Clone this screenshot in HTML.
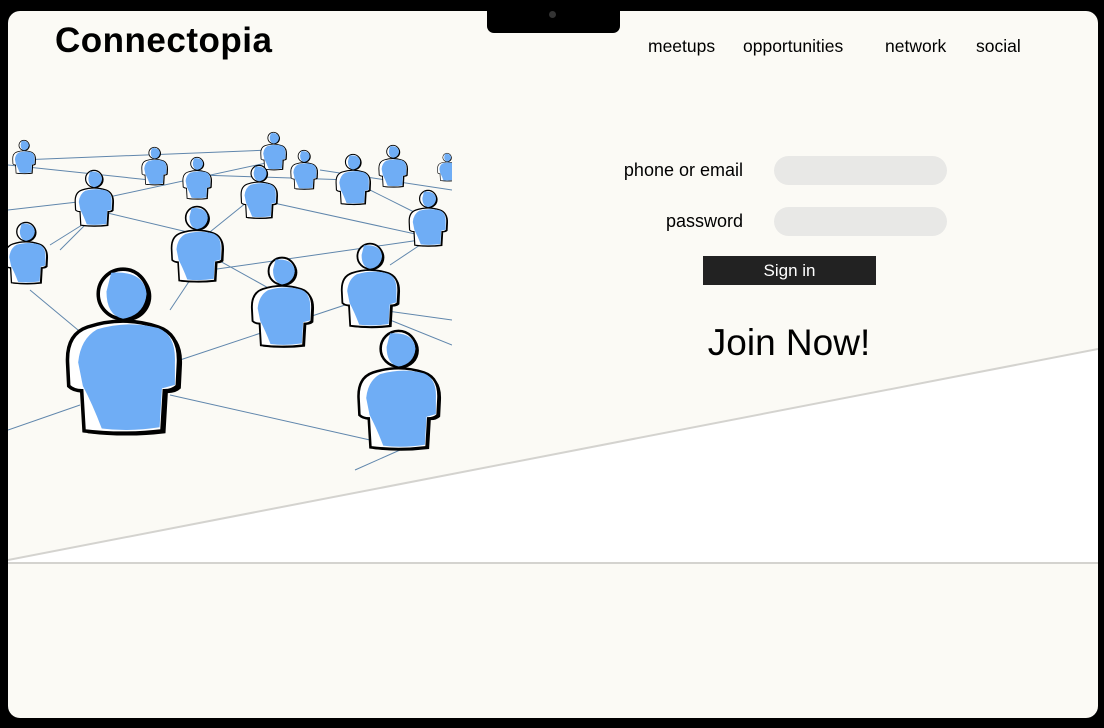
<!DOCTYPE html>
<html><head><meta charset="utf-8"><style>
html,body{margin:0;padding:0;width:1104px;height:728px;background:#000;overflow:hidden;font-family:"Liberation Sans",sans-serif}
#scr{position:absolute;left:8px;top:11px;width:1090px;height:707px;background:#fbfaf5;border-radius:12px;overflow:hidden}
.a{position:absolute;color:#000}
.nav{top:25px;font-size:17.5px}
.inp{position:absolute;left:766px;width:173px;height:29px;background:#e8e8e6;border-radius:15px}
</style></head><body>
<div id="scr">
<svg width="1090" height="707" style="position:absolute;left:0;top:0">
<defs>
<g id="p">
<circle cx="53" cy="24" r="21" fill="#000"/>
<path d="M23 52 Q53 42 83 52 Q101 58 100 82 L99 102 Q95 106 88 106 L86 140 Q53 144 20 140 L18 106 Q11 106 7 102 L6 82 Q5 58 23 52Z" fill="#000"/>
<circle cx="50" cy="22" r="21" fill="#fff" stroke="#000" stroke-width="3"/>
<path d="M40 4 Q68 2 70 22 Q68 40 50 43 Q36 40 36 20Z" fill="#6fadf5"/>
<path d="M20 50 Q50 40 80 50 Q98 56 97 80 L96 100 Q92 104 85 104 L83 138 Q50 142 17 138 L15 104 Q8 104 4 100 L3 80 Q2 56 20 50Z" fill="#fff" stroke="#000" stroke-width="3"/>
<path d="M28 52 Q55 44 80 51 Q95 57 94 80 L94 99 L83 102 L81 135 Q55 139 32 136 Q24 115 16 100 L12 80 Q14 60 28 52Z" fill="#6fadf5"/>
</g>
</defs>
<polygon points="0,549 1090,338 1090,552 0,552" fill="#fff"/>
<line x1="0" y1="549" x2="1090" y2="338" stroke="#d4d3cf" stroke-width="2"/>
<line x1="0" y1="552" x2="1090" y2="552" stroke="#d4d3cf" stroke-width="2"/>
<g transform="translate(-8,-11)">
<svg x="8" y="120" width="444" height="352" viewBox="8 120 444 352">
<g stroke="#3a6a9a" stroke-width="1" opacity=".8">
<line x1="8" y1="165" x2="150" y2="180"/><line x1="20" y1="160" x2="270" y2="150"/><line x1="95" y1="200" x2="280" y2="160"/>
<line x1="95" y1="200" x2="8" y2="210"/><line x1="95" y1="210" x2="200" y2="235"/><line x1="60" y1="250" x2="95" y2="215"/>
<line x1="200" y1="175" x2="350" y2="180"/><line x1="260" y1="200" x2="420" y2="235"/><line x1="200" y1="240" x2="262" y2="190"/>
<line x1="210" y1="270" x2="420" y2="240"/><line x1="200" y1="250" x2="290" y2="300"/><line x1="30" y1="290" x2="90" y2="340"/>
<line x1="180" y1="360" x2="360" y2="300"/><line x1="170" y1="395" x2="370" y2="440"/><line x1="8" y1="430" x2="80" y2="405"/>
<line x1="380" y1="310" x2="452" y2="320"/><line x1="390" y1="320" x2="452" y2="345"/><line x1="355" y1="470" x2="400" y2="450"/>
<line x1="320" y1="170" x2="452" y2="190"/><line x1="390" y1="265" x2="420" y2="245"/><line x1="170" y1="310" x2="190" y2="280"/>
<line x1="350" y1="180" x2="420" y2="215"/><line x1="50" y1="245" x2="90" y2="220"/>
</g>
<use href="#p" transform="translate(12,140) scale(.24)"/>
<use href="#p" transform="translate(260,132) scale(.27)"/>
<use href="#p" transform="translate(141,147) scale(.27)"/>
<use href="#p" transform="translate(378,145) scale(.3)"/>
<use href="#p" transform="translate(290,150) scale(.28)"/>
<use href="#p" transform="translate(437,153) scale(.2)"/>
<use href="#p" transform="translate(182,157) scale(.3)"/>
<use href="#p" transform="translate(335,154) scale(.36)"/>
<use href="#p" transform="translate(240,165) scale(.38)"/>
<use href="#p" transform="translate(74,170) scale(.4)"/>
<use href="#p" transform="translate(408,190) scale(.4)"/>
<use href="#p" transform="translate(170,206) scale(.54)"/>
<use href="#p" transform="translate(4,222) scale(.44)"/>
<use href="#p" transform="translate(340,243) scale(.6)"/>
<use href="#p" transform="translate(250,257) scale(.64)"/>
<use href="#p" transform="translate(64,268) scale(1.18)"/>
<use href="#p" transform="translate(356,330) scale(.85)"/>
</svg>
</g>
</svg>
<div class="a" style="left:47px;top:10px;font-size:35px;font-weight:bold;letter-spacing:.5px">Connectopia</div>
<div class="a nav" style="left:640px">meetups</div>
<div class="a nav" style="left:735px">opportunities</div>
<div class="a nav" style="left:877px">network</div>
<div class="a nav" style="left:968px">social</div>
<div class="a" style="right:355px;top:149px;font-size:18px">phone or email</div>
<div class="a" style="right:355px;top:200px;font-size:18px">password</div>
<div class="inp" style="top:145px"></div>
<div class="inp" style="top:196px"></div>
<div class="a" style="left:695px;top:245px;width:173px;height:29px;background:#222;color:#fff;font-size:17px;text-align:center;line-height:29px">Sign in</div>
<div class="a" style="left:581px;top:311px;width:400px;text-align:center;font-size:37px">Join Now!</div>
</div>
<div style="position:absolute;left:487px;top:0;width:133px;height:33px;background:#000;border-radius:0 0 7px 7px"></div>
<div style="position:absolute;left:549px;top:11px;width:7px;height:7px;background:#333;border-radius:50%"></div>
</body></html>
